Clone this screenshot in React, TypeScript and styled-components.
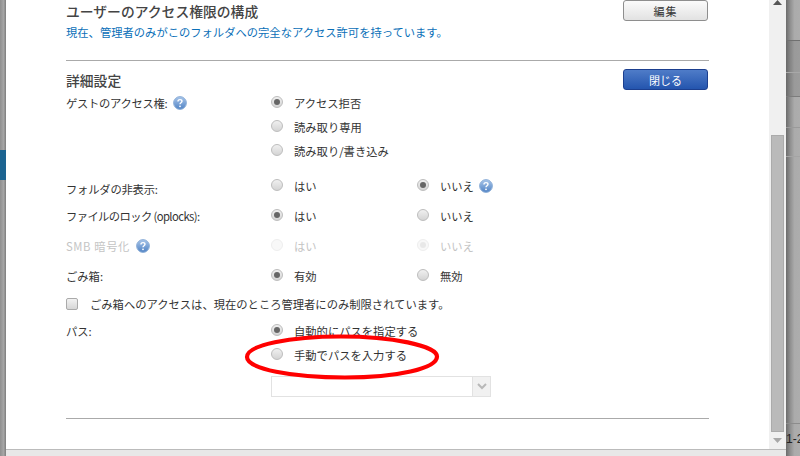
import React from "react";
import styled, { createGlobalStyle } from "styled-components";

const Global = createGlobalStyle`
  html, body { margin: 0; padding: 0; background: #fff; overflow: hidden; }
  body { font-family: "Noto Sans CJK JP", "Liberation Sans", sans-serif; }
`;
const Page = styled.div`
  width: 800px; height: 456px; display: flex; overflow: hidden; position: relative;
`;
const LeftBackdrop = styled.div`
  width: 6px; display: flex; flex-direction: column;
  background: linear-gradient(90deg, #8f8f8f, #a6a6a6 60%, #7d7d7d);
`;
const LeftTab = styled.div`
  height: 30px; margin-top: 150px; background: #1c6491;
`;
const Modal = styled.div`
  width: 780px; display: flex; flex-direction: column; background: #fff;
`;
const Body = styled.div`
  height: 449px; display: flex;
`;
const Main = styled.div`
  width: 763px; box-sizing: border-box; padding-left: 60px; padding-right: 60px; display: flex; flex-direction: column;
  color: #333; font-size: 11.3px;
`;
const Footer = styled.div`
  height: 6px; border-top: 1px solid #bbb; background: #e8e8e8;
`;
const Scrollbar = styled.div`
  width: 17px; background: #f0f0f0; display: flex; flex-direction: column; align-items: center;
`;
const ScrollArrow = styled.svg`
  width: 9px; height: 5px; flex: none; display: block;
`;
const ScrollTrack = styled.div`
  flex: 1; display: flex; flex-direction: column; width: 13px; padding-top: 130px; padding-bottom: 6px;
`;
const ScrollThumb = styled.div`
  flex: 1; background: #bababa; border: 1px solid #ababab;
`;
const RightBackdrop = styled.div`
  width: 14px; display: flex; flex-direction: column;
  background: linear-gradient(90deg, #6c6c6c, #8f8f8f 30%, #ababab 60%, #adadad);
`;
const BackdropRow = styled.div<{ $h: number; $line: string; $shade?: boolean }>`
  height: ${p => p.$h}px; flex: none; box-sizing: border-box; border-bottom: 1px solid ${p => p.$line};
  background: ${p => (p.$shade ? "rgba(90,90,90,0.2)" : "transparent")};
`;
const Pager = styled.div`
  flex: none; margin-top: 8px; font: 12px/14px "Liberation Sans", sans-serif; color: #222; white-space: nowrap; overflow: hidden;
`;
const SectionHead = styled.div<{ $h: number }>`
  height: ${p => p.$h}px; width: 642px; display: flex; justify-content: space-between; align-items: center;
`;
const Title = styled.h2`
  margin: 0; font-size: 13.8px; font-weight: 500; line-height: 20px; color: #444;
`;
const Note = styled.div`
  height: 22px; line-height: 22px; color: #0b70b8;
`;
const Rule = styled.hr<{ $top: number; $bottom: number }>`
  margin: ${p => p.$top}px 0 ${p => p.$bottom}px; width: 643px; border: 0; border-top: 1px solid #aaa; height: 0; flex: none;
`;
const Button = styled.button<{ $primary?: boolean }>`
  width: 85px; height: 21px; padding: 0; border-radius: 3px; font: 11px/18px "Noto Sans CJK JP", sans-serif;
  letter-spacing: ${p => (p.$primary ? "0" : "1px")};
  color: ${p => (p.$primary ? "#fff" : "#333")};
  border: 1px solid ${p => (p.$primary ? "#1c3f8f" : "#8e8e8e")};
  background: ${p => (p.$primary ? "linear-gradient(#4f7cc8, #2455ae)" : "linear-gradient(#fbfbfb, #e2e2e2)")};
`;
const Row = styled.div<{ $h: number; $disabled?: boolean; $top?: number }>`
  height: ${p => p.$h}px; margin-top: ${p => p.$top ?? 0}px; display: grid; grid-template-columns: 205px 146px 1fr; align-items: center;
  color: ${p => (p.$disabled ? "#c4c4c4" : "#333")};
`;
const Label = styled.div<{ $shift?: number; $spacing?: number }>`
  display: flex; align-items: center; gap: 6px; line-height: 16px; padding-top: ${p => p.$shift ?? 2}px;
  letter-spacing: ${p => p.$spacing ?? 0}px; white-space: nowrap;
`;
const Option = styled.div`
  display: flex; align-items: center; gap: 11px; line-height: 16px; white-space: nowrap;
`;
const OptionText = styled.span`
  display: flex; align-items: center; gap: 5px; padding-top: 2px;
`;
const Radio = styled.span<{ $on?: boolean; $disabled?: boolean }>`
  width: 12px; height: 12px; flex: none; box-sizing: border-box; border-radius: 50%; display: flex; align-items: center; justify-content: center;
  border: 1px solid ${p => (p.$disabled ? "#eee" : "#bdbdbd")};
  background: ${p => (p.$disabled ? "#f8f8f8" : "linear-gradient(#f0f0f0, #d4d4d4)")};
  &::after {
    content: ""; width: 6px; height: 6px; border-radius: 50%;
    background: ${p => (p.$on ? (p.$disabled ? "#e8e8e8" : "#666") : "transparent")};
  }
`;
const CheckRow = styled.div`
  height: 28px; display: flex; align-items: center; gap: 12px; line-height: 16px;
`;
const Check = styled.span`
  width: 12px; height: 12px; box-sizing: border-box; border: 1px solid #aaa; border-radius: 2px; background: linear-gradient(#f2f2f2, #d6d6d6); flex: none;
`;
const SelectRow = styled.div`
  height: 21px; margin-top: 10px; padding-left: 205px; display: flex; flex: none;
`;
const Select = styled.div`
  width: 220px; height: 21px; box-sizing: border-box; border: 1px solid #e2e2e2; display: flex; justify-content: flex-end; background: #fff;
`;
const SelectArrow = styled.div`
  width: 17px; background: #f1f1f1; border-left: 1px solid #e2e2e2; display: flex; align-items: center; justify-content: center;
`;
const Annotation = styled.svg`
  position: absolute; left: 240px; top: 330px; width: 204px; height: 54px; pointer-events: none;
`;

const Help = () => (
  <svg width="14" height="14" viewBox="0 0 14 14" style={{ flex: "none" }}>
    <defs>
      <linearGradient id="helpfill" x1="0" y1="0" x2="0" y2="1">
        <stop offset="0" stopColor="#a9c6ea" />
        <stop offset="1" stopColor="#4f82c4" />
      </linearGradient>
    </defs>
    <circle cx="7" cy="7" r="6.4" fill="url(#helpfill)" stroke="#8fb0d8" />
    <path d="M5 5.4c0-1.1.9-1.8 2-1.8s2 .7 2 1.7c0 1.4-2 1.4-2 2.9" fill="none" stroke="#fff" strokeWidth="1.4" />
    <circle cx="7" cy="10.3" r=".9" fill="#fff" />
  </svg>
);

const RadioOption = ({ on, disabled, text, help }: { on?: boolean; disabled?: boolean; text: string; help?: boolean }) => (
  <Option>
    <Radio $on={on} $disabled={disabled} />
    <OptionText>{text}{help && <Help />}</OptionText>
  </Option>
);

export default function App() {
  return (
    <Page>
      <Global />
      <LeftBackdrop><LeftTab /></LeftBackdrop>
      <Modal>
        <Body>
          <Main>
            <SectionHead $h={21}>
              <Title>ユーザーのアクセス権限の構成</Title>
              <Button>編集</Button>
            </SectionHead>
            <Note>現在、管理者のみがこのフォルダへの完全なアクセス許可を持っています。</Note>
            <Rule $top={17} $bottom={8} />
            <SectionHead $h={21}>
              <Title>詳細設定</Title>
              <Button $primary>閉じる</Button>
            </SectionHead>
            <Row $h={24}>
              <Label $spacing={-0.3}>ゲストのアクセス権:<Help /></Label>
              <RadioOption on text="アクセス拒否" />
            </Row>
            <Row $h={24}><span /><RadioOption text="読み取り専用" /></Row>
            <Row $h={24}><span /><RadioOption text="読み取り/書き込み" /></Row>
            <Row $h={30} $top={8}>
              <Label $shift={8} $spacing={-0.2}>フォルダの非表示:</Label>
              <RadioOption text="はい" />
              <RadioOption on text="いいえ" help />
            </Row>
            <Row $h={30}>
              <Label $spacing={-0.6}>ファイルのロック (oplocks):</Label>
              <RadioOption on text="はい" />
              <RadioOption text="いいえ" />
            </Row>
            <Row $h={30} $disabled>
              <Label $spacing={0.6}>SMB 暗号化<Help /></Label>
              <RadioOption disabled text="はい" />
              <RadioOption disabled on text="いいえ" />
            </Row>
            <Row $h={30}>
              <Label>ごみ箱:</Label>
              <RadioOption on text="有効" />
              <RadioOption text="無効" />
            </Row>
            <CheckRow><Check />ごみ箱へのアクセスは、現在のところ管理者にのみ制限されています。</CheckRow>
            <Row $h={24}>
              <Label>パス:</Label>
              <RadioOption on text="自動的にパスを指定する" />
            </Row>
            <Row $h={24}><span /><RadioOption text="手動でパスを入力する" /></Row>
            <SelectRow>
              <Select>
                <SelectArrow>
                  <svg width="10" height="7" viewBox="0 0 10 7"><path d="M1 1l4 4 4-4" fill="none" stroke="#b8b8b8" strokeWidth="2" /></svg>
                </SelectArrow>
              </Select>
            </SelectRow>
            <Rule $top={21} $bottom={0} />
          </Main>
          <Scrollbar>
            <ScrollArrow viewBox="0 0 9 5"><path d="M4.5 0L9 5H0z" fill="#555" /></ScrollArrow>
            <ScrollTrack><ScrollThumb /></ScrollTrack>
            <ScrollArrow viewBox="0 0 9 5"><path d="M4.5 5L9 0H0z" fill="#a8a8a8" /></ScrollArrow>
            <span style={{ height: 6 }} />
          </Scrollbar>
        </Body>
        <Footer />
      </Modal>
      <RightBackdrop>
        <BackdropRow $h={41} $line="#707070" />
        <BackdropRow $h={32} $line="#a8a8a8" $shade />
        <BackdropRow $h={24} $line="#7c7c7c" $shade />
        <BackdropRow $h={31} $line="#9a9a9a" />
        <BackdropRow $h={29} $line="#a4a4a4" />
        <BackdropRow $h={267} $line="#8c8c8c" />
        <Pager>1-2</Pager>
      </RightBackdrop>
      <Annotation viewBox="0 0 204 54">
        <path d="M7 27C7 15 50 6.5 101 6.5c50 0 96 9 96 20 0 12-40 21-92 21C52 47.500 7 39 7 27z" fill="none" stroke="#f00" strokeWidth="4.2" />
      </Annotation>
    </Page>
  );
}
